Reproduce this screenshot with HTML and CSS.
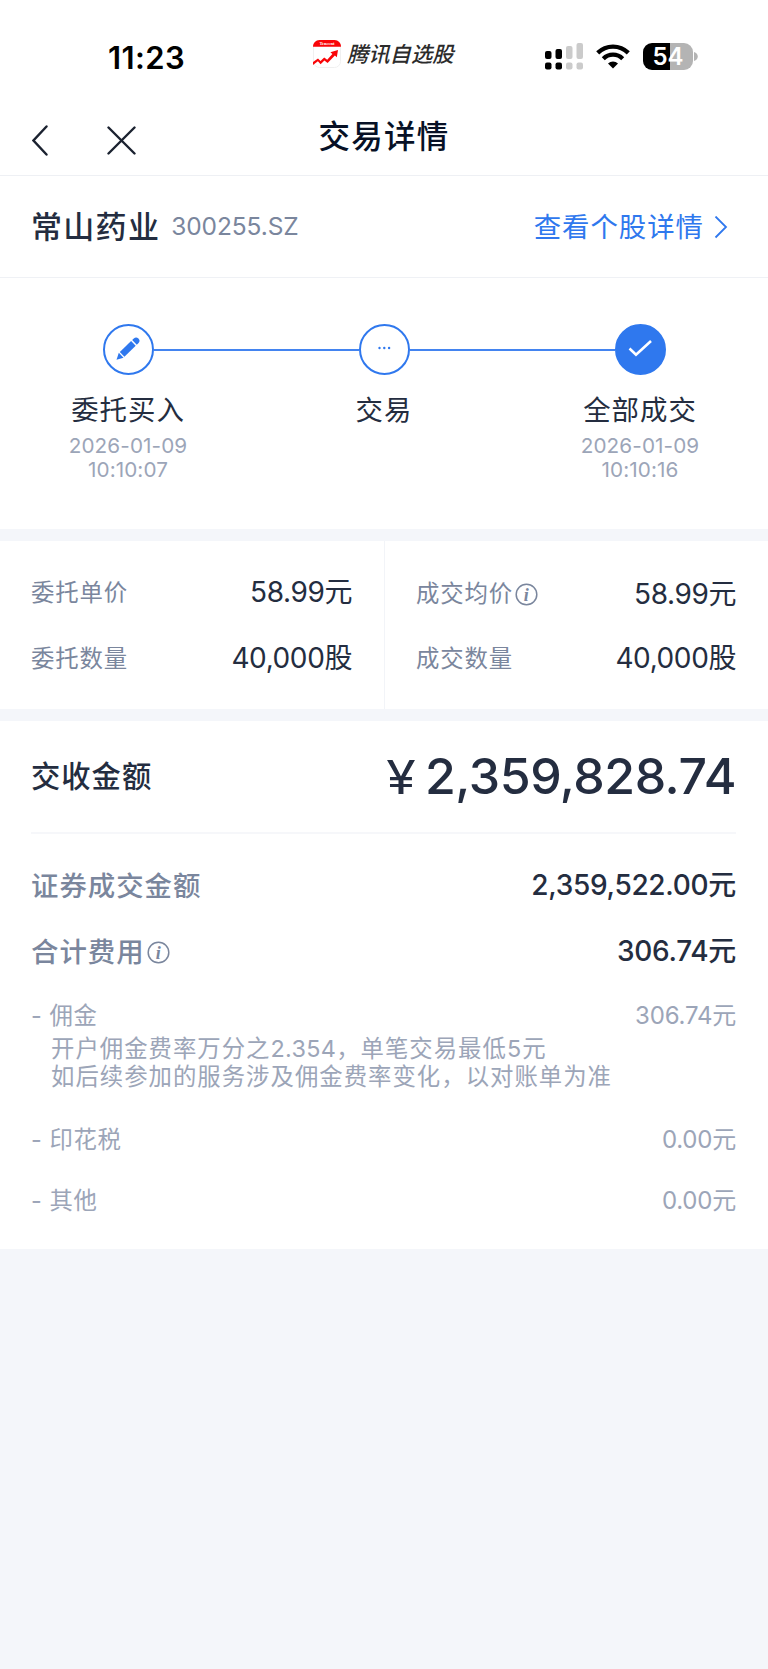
FILE: index.html
```html
<!DOCTYPE html>
<html lang="zh-CN">

<head>
  <title>交易详情</title>
  <meta charset="UTF-8">
  <meta name="viewport" content="width=device-width, initial-scale=1.0">
  <link rel="stylesheet" href="styles.css">
</head>

<body>
  <div class="status-bar">
    <div class="time">11:23</div>
    <div class="brand">
      <svg class="brand-logo" width="28" height="28" viewBox="0 0 28 28">
        <rect x="0.5" y="0.5" width="27" height="27" rx="6" fill="#fff" stroke="#f0f0f0" />
        <path d="M0 6.7C0 3 2.8 0 6.5 0h15C25.200 0 28 3 28 6.700z" fill="#f90508" />
        <text class="brand-tag" x="14" y="5.200" text-anchor="middle">Tencent</text>
        <path d="M0 22L5 18.500l2.500 2.500 3.700-3.600 3 2.400 5.200-5.700-2-1.800 7.600-2.300-1.200 7.200-1.900-1.700-7.300 7.600-3.200-2.600-3.800 3.800-2.700-3L0 25z" fill="#f90508" />
      </svg>
      <span>腾讯自选股</span>
    </div>
    <div class="indicators">
      <svg width="39" height="27" viewBox="0 0 39 27">
        <g fill="#000">
          <rect x="0" y="8" width="6.500" height="8" rx="2" />
          <rect x="10.500" y="6" width="6.500" height="10" rx="2" />
          <rect x="0" y="19.500" width="6.500" height="7" rx="2" />
          <rect x="10.500" y="19.500" width="6.500" height="7" rx="2" />
        </g>
        <g fill="#cbcbcb">
          <rect x="21" y="3" width="6.500" height="13" rx="2" />
          <rect x="31.500" y="0" width="6.500" height="16" rx="2" />
          <rect x="21" y="19.500" width="6.500" height="7" rx="2" />
          <rect x="31.500" y="19.500" width="6.500" height="7" rx="2" />
        </g>
      </svg>
      <svg class="wifi" width="34" height="25" viewBox="0 0 34 25">
        <g fill="none" stroke="#000" stroke-width="4.300">
          <path d="M1.700 8.900a21.800 21.800 0 0 1 30.600 0" />
          <path d="M7.300 14.700a13.800 13.800 0 0 1 19.400 0" />
        </g>
        <path d="M17 24.500l-5-5a7.200 7.200 0 0 1 10 0z" fill="#000" />
      </svg>
      <div class="battery"><span>54</span></div>
      <svg class="battery-tip" width="4" height="9" viewBox="0 0 4 9">
        <path d="M0 0C5 1.500 5 7.500 0 9z" fill="#b4b4b4" />
      </svg>
    </div>
  </div>

  <header class="nav">
    <div class="nav-buttons">
      <svg width="16" height="31" viewBox="0 0 16 31">
        <path d="M14.500 1.500L1.500 15.500l13 14" fill="none" stroke="#1b2230" stroke-width="2.400" stroke-linecap="round" />
      </svg>
      <svg width="29" height="29" viewBox="0 0 29 29">
        <path d="M1.500 1.500l26 26M27.500 1.500l-26 26" fill="none" stroke="#1b2230" stroke-width="2.400" stroke-linecap="round" />
      </svg>
    </div>
    <h1>交易详情</h1>
  </header>

  <section class="stock">
    <span class="stock-name">常山药业</span>
    <span class="stock-code">300255.SZ</span>
    <a class="stock-link">查看个股详情
      <svg width="14" height="24" viewBox="0 0 14 24">
        <path d="M1.500 0.500L12 11 1.500 21.500" fill="none" stroke="#2f78ee" stroke-width="1.800" />
      </svg>
    </a>
  </section>

  <section class="steps">
    <div class="step">
      <div class="step-icon">
        <svg width="51" height="51" viewBox="2 2 47 47">
          <g transform="translate(13.500 35.800) rotate(-44)" fill="#2f78ee">
            <path d="M0 0l6.500-3.400v6.800z" />
            <path d="M7.800-3.300h15.700v6.600H7.800z" />
            <path d="M25-3.300h2.200a3.300 3.300 0 0 1 0 6.600H25z" />
          </g>
        </svg>
      </div>
      <div class="step-name">委托买入</div>
      <div class="step-time">2026-01-09<br>10:10:07</div>
    </div>
    <div class="step">
      <div class="step-icon">
        <svg width="51" height="51" viewBox="2 2 47 47">
          <g fill="#2f78ee">
            <circle cx="20.500" cy="24" r="1.200" />
            <circle cx="25.300" cy="24" r="1.200" />
            <circle cx="30.100" cy="24" r="1.200" />
          </g>
        </svg>
      </div>
      <div class="step-name">交易</div>
    </div>
    <div class="step">
      <div class="step-icon done">
        <svg width="51" height="51" viewBox="2 2 47 47">
          <path d="M14.500 24.500l6.500 6.200L36 17" fill="none" stroke="#fff" stroke-width="2.600" />
        </svg>
      </div>
      <div class="step-name">全部成交</div>
      <div class="step-time">2026-01-09<br>10:10:16</div>
    </div>
  </section>

  <section class="quote">
    <div class="quote-col">
      <div class="quote-row"><span class="label">委托单价</span><span class="value">58.99元</span></div>
      <div class="quote-row"><span class="label">委托数量</span><span class="value">40,000股</span></div>
    </div>
    <div class="quote-col">
      <div class="quote-row with-info">
        <span class="label">成交均价<svg class="info" width="23" height="23" viewBox="0 0 23 23">
            <circle cx="11.500" cy="11.500" r="10.300" />
            <text x="11.300" y="17.500" text-anchor="middle">i</text>
          </svg></span>
        <span class="value">58.99元</span>
      </div>
      <div class="quote-row"><span class="label">成交数量</span><span class="value">40,000股</span></div>
    </div>
  </section>

  <section class="settle">
    <div class="total">
      <span class="total-label">交收金额</span>
      <span class="total-value"><span class="yen">¥</span>2,359,828.74</span>
    </div>

    <div class="detail-row">
      <span class="label">证券成交金额</span>
      <span class="value">2,359,522.00元</span>
    </div>
    <div class="detail-row">
      <span class="label">合计费用<svg class="info" width="23" height="23" viewBox="0 0 23 23">
          <circle cx="11.500" cy="11.500" r="10.300" />
          <text x="11.300" y="17.500" text-anchor="middle">i</text>
        </svg></span>
      <span class="value">306.74元</span>
    </div>

    <div class="fee">
      <div class="fee-row"><span class="label">- 佣金</span><span>306.74元</span></div>
      <p class="fee-note">开户佣金费率万分之<span class="num">2.354</span>，单笔交易最低5元<br>如后续参加的服务涉及佣金费率变化，以对账单为准</p>
    </div>
    <div class="fee">
      <div class="fee-row"><span class="label">- 印花税</span><span>0.00元</span></div>
    </div>
    <div class="fee">
      <div class="fee-row"><span class="label">- 其他</span><span>0.00元</span></div>
    </div>
  </section>
</body>

</html>
```
FILE: styles.css
```css
* {
  box-sizing: border-box;
}

body {
  margin: 0;
  min-height: 1669px;
  background-color: #f4f6fa;
  color: #242d40;
  font-family: Inter, "Noto Sans CJK SC", sans-serif;
  line-height: 1.2;
}

svg {
  display: block;
  flex: none;
}

.status-bar {
  display: grid;
  grid-template-columns: 313px 1fr 223px;
  align-items: center;
  height: 100px;
  background-color: #fff;
  color: #000;
}

.time {
  padding-left: 108px;
  margin-top: 15px;
  font-size: 31px;
  font-weight: 600;
  letter-spacing: 0.4px;
  line-height: 36px;
}

.brand {
  display: flex;
  align-items: center;
  gap: 6px;
  margin-top: 8px;
  color: #2b2b2b;
  font-size: 21.3px;
  font-style: italic;
  font-weight: 500;
  line-height: 28px;
  white-space: nowrap;
}

.brand-tag {
  fill: #fff;
  font-family: "Liberation Serif", serif;
  font-size: 4.5px;
  font-style: normal;
  font-weight: bold;
}

.indicators {
  display: flex;
  align-items: center;
  margin-top: 12px;
}

.wifi {
  margin-left: 12px;
}

.battery {
  width: 50px;
  height: 27px;
  margin-left: 13px;
  border-radius: 9px;
  background: linear-gradient(to right, #000 27px, #b4b4b4 27px);
  color: #fff;
  font-size: 24px;
  font-weight: 600;
  line-height: 27px;
  text-align: center;
}

.battery-tip {
  margin-left: 1px;
}

.nav {
  display: grid;
  grid-template-columns: 1fr auto 1fr;
  height: 76px;
  border-bottom: 1px solid #eef0f4;
  background-color: #fff;
}

.nav-buttons {
  display: flex;
  align-items: center;
  gap: 59px;
  padding: 6px 0 0 32px;
}

.nav h1 {
  margin: 0;
  color: #071126;
  font-size: 31.5px;
  font-weight: 500;
  letter-spacing: 1.3px;
  line-height: 73px;
}

.stock {
  display: flex;
  align-items: center;
  height: 102px;
  padding: 0 40px 0 31px;
  border-bottom: 1px solid #eff1f5;
  background-color: #fff;
}

.stock-name {
  font-size: 31px;
  font-weight: 500;
  letter-spacing: 1.3px;
}

.stock-code {
  margin-left: 11px;
  color: #7a869d;
  font-size: 24.5px;
  letter-spacing: -0.1px;
}

.stock-link {
  display: flex;
  align-items: center;
  gap: 10px;
  margin-left: auto;
  padding-top: 2px;
  color: #2f78ee;
  font-size: 27.4px;
  letter-spacing: 1px;
}

.steps {
  display: grid;
  grid-template-columns: repeat(3, 1fr);
  height: 251px;
  padding-top: 46px;
  background-color: #fff;
  text-align: center;
}

/* the connecting line runs through each step, up to the circle */
.step-icon {
  display: flex;
  align-items: center;
}

.step-icon::before,
.step-icon::after {
  content: "";
  flex: 1;
  height: 2px;
  background-color: #4384f0;
}

.step:first-child .step-icon::before,
.step:last-child .step-icon::after {
  background-color: transparent;
}

.step-icon svg {
  border: 2px solid #2f78ee;
  border-radius: 50%;
}

.step-icon.done svg {
  background-color: #2f78ee;
}

.step-name {
  margin-top: 17px;
  font-size: 27.4px;
  letter-spacing: 1px;
  line-height: 36px;
}

.step-time {
  margin-top: 6px;
  color: #9ca5b8;
  font-size: 20.7px;
  letter-spacing: 0.1px;
  line-height: 24.4px;
}

.quote {
  display: grid;
  grid-template-columns: 1fr 1fr;
  height: 168px;
  margin: 12px 0;
  background-color: #fff;
}

.quote-col {
  padding: 19px 32px 17px 31px;
}

.quote-col + .quote-col {
  border-left: 1px solid #f2f4f8;
}

.quote-row {
  display: flex;
  align-items: center;
  justify-content: space-between;
  height: 66px;
}

.quote-row.with-info {
  padding-top: 3px;
}

.quote-row .label {
  display: flex;
  align-items: center;
  color: #7a869d;
  font-size: 23.4px;
  letter-spacing: 0.9px;
}

.quote-row .value {
  font-size: 28px;
  letter-spacing: -0.4px;
}

.info {
  margin-left: 2px;
}

.info circle {
  fill: none;
  stroke: #7a869d;
  stroke-width: 1.5;
}

.info text {
  fill: #7a869d;
  font-family: "Liberation Serif", serif;
  font-size: 18px;
  font-style: italic;
  font-weight: bold;
  letter-spacing: 0;
}

.settle {
  height: 528px;
  padding: 0 32px 0 31px;
  background-color: #fff;
}

.total {
  display: flex;
  align-items: center;
  justify-content: space-between;
  height: 113px;
  border-bottom: 2px solid #f6f7fa;
}

.total-label {
  font-size: 29.3px;
  font-weight: 500;
  letter-spacing: 1px;
}

.total-value {
  font-size: 50px;
  font-weight: 500;
  letter-spacing: -0.45px;
  line-height: 58px;
}

.yen {
  display: inline-block;
  margin-right: 12px;
  font-size: 47px;
  font-weight: 400;
  transform: scaleX(1.14);
}

.detail-row {
  display: flex;
  align-items: center;
  justify-content: space-between;
  height: 66px;
  font-weight: 500;
}

.total + .detail-row {
  margin-top: 19px;
}

.detail-row .label {
  display: flex;
  align-items: center;
  color: #7a869d;
  font-size: 27.4px;
  letter-spacing: 1px;
}

.detail-row .value {
  font-size: 28px;
  letter-spacing: -0.3px;
}

.fee {
  padding: 16px 0 15px;
  color: #9ca5b8;
  font-size: 24px;
  line-height: 30px;
}

.fee-row {
  display: flex;
  justify-content: space-between;
  letter-spacing: -0.2px;
}

.fee-row .label {
  font-size: 23.4px;
  letter-spacing: 0.6px;
}

.fee-note {
  margin: 4px 0 3px;
  padding-left: 20px;
  font-size: 23.4px;
  letter-spacing: 1px;
  line-height: 28px;
}

.fee-note .num {
  letter-spacing: 0.3px;
}
```
